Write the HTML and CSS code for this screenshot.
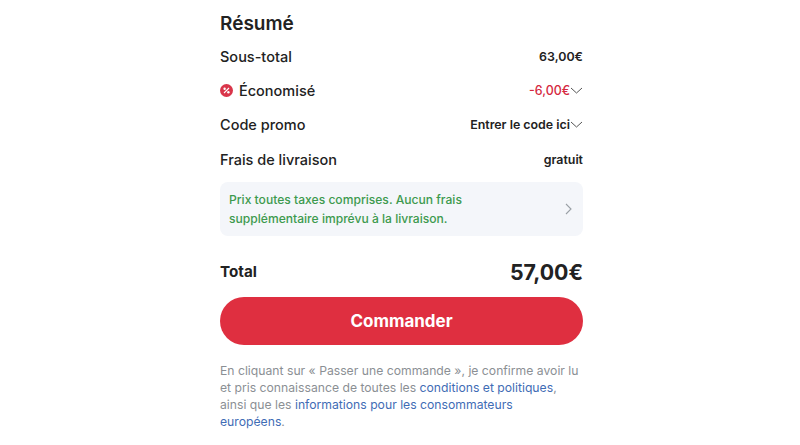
FILE: index.html
```html
<!DOCTYPE html>
<html lang="fr">
<head>
    <meta charset="UTF-8">
    <title>Résumé</title>
    <link rel="stylesheet" href="styles.css">
</head>
<body>
<div class="summary">
    <h2>Résumé</h2>
    <div class="row">
        <span class="label">Sous-total</span>
        <span class="value">63,00€</span>
    </div>
    <div class="row">
        <span class="label">
            <svg class="badge" width="13" height="13" viewBox="0 0 13 13">
                <circle cx="6.5" cy="6.5" r="6.5" fill="#d9354a"/>
                <circle cx="4.6" cy="4.8" r="1.2" fill="#fff"/>
                <circle cx="8.4" cy="8.2" r="1.2" fill="#fff"/>
                <path d="M9 4 4 9" stroke="#fff" stroke-width="1.1"/>
            </svg>
            Économisé
        </span>
        <span class="value red">-6,00€<svg class="chev" width="13" height="7" viewBox="0 0 13 7"><path d="M1 1l5.5 5L12 1" fill="none" stroke="#555" stroke-width="1"/></svg></span>
    </div>
    <div class="row">
        <span class="label">Code promo</span>
        <span class="value">Entrer le code ici<svg class="chev" width="13" height="7" viewBox="0 0 13 7"><path d="M1 1l5.5 5L12 1" fill="none" stroke="#555" stroke-width="1"/></svg></span>
    </div>
    <div class="row">
        <span class="label">Frais de livraison</span>
        <span class="value">gratuit</span>
    </div>
    <div class="notice">
        <p>Prix toutes taxes comprises. Aucun frais<br>supplémentaire imprévu à la livraison.</p>
        <svg width="7" height="12" viewBox="0 0 7 12"><path d="M1 1l5 5-5 5" fill="none" stroke="#9aa0a6" stroke-width="1.1"/></svg>
    </div>
    <div class="total">
        <span>Total</span>
        <span class="amount">57,00€</span>
    </div>
    <button class="order">Commander</button>
    <p class="legal">En cliquant sur « Passer une commande », je confirme avoir lu<br>et pris connaissance de toutes les <a href="#">conditions et politiques</a>,<br>ainsi que les <a href="#">informations pour les consommateurs<br>européens</a>.</p>
</div>
</body>
</html>
```

FILE: styles.css
```css
body{
    margin: 0;
    background: #fff;
    color: #222;
    font-family: "Inter", "Noto Sans", sans-serif;
}
.summary{
    width: 363px;
    margin-left: 220px;
    padding-top: 12px;
}
h2{
    margin: 0 0 3px;
    font-size: 19px;
    line-height: 24px;
    font-weight: 600;
}
.row{
    display: flex;
    justify-content: space-between;
    align-items: center;
    height: 34.4px;
}
.label{
    display: flex;
    align-items: center;
    font-size: 14.5px;
    font-weight: 500;
}
.badge{
    margin-right: 6px;
}
.value{
    display: flex;
    align-items: center;
    font-size: 12.4px;
    font-weight: 600;
}
.red{
    color: #d5293f;
    font-weight: 500;
}
.notice{
    display: flex;
    justify-content: space-between;
    align-items: center;
    height: 54px;
    margin-top: 5px;
    padding: 0 11px 0 9px;
    background: #f4f6fa;
    border-radius: 8px;
}
.notice p{
    margin: 0;
    color: #3d9a4e;
    font-size: 12.1px;
    font-weight: 500;
    line-height: 19px;
}
.total{
    display: flex;
    justify-content: space-between;
    align-items: center;
    margin-top: 20px;
    height: 32px;
    font-size: 15.2px;
    font-weight: 700;
}
.amount{
    font-size: 21.3px;
}
.order{
    display: block;
    width: 100%;
    height: 48px;
    margin-top: 9px;
    border: none;
    border-radius: 24px;
    background: #df2f40;
    color: #fff;
    font-family: inherit;
    font-size: 17px;
    font-weight: 700;
}
.legal{
    margin: 17px 0 0;
    color: #8b8f94;
    font-size: 12.2px;
    line-height: 17.2px;
}
.legal a{
    color: #3f6cb5;
    text-decoration: none;
}
```
